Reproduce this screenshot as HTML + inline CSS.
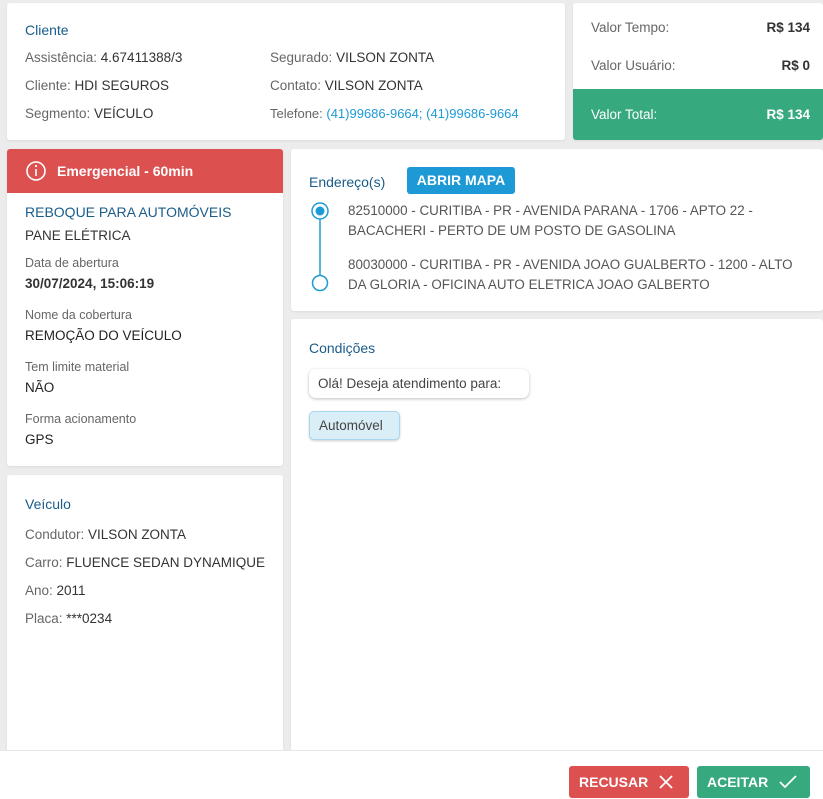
<!DOCTYPE html>
<html><head><meta charset="utf-8"><style>
*{box-sizing:border-box;margin:0;padding:0}
body{width:823px;height:799px;background:#ececec;font-family:"Liberation Sans",sans-serif;font-size:13.5px;color:#666;position:relative;overflow:hidden}
.card{position:absolute;background:#fff;border-radius:3px;box-shadow:0 1px 2px rgba(0,0,0,.08)}
.t{position:absolute;white-space:nowrap}
.h{color:#1a5d8a;font-size:14px}
.b{color:#333}
.lnk{color:#1d9ad6}
.sm{font-size:12.5px;color:#666}
.bold{font-weight:bold;color:#333}
</style></head><body>
<div class="card" style="left:7px;top:3px;width:558px;height:137px">
<div class="t h" style="left:18px;top:19px">Cliente</div>
<div class="t" style="left:18px;top:47px">Assistência: <span class="b">4.67411388/3</span></div>
<div class="t" style="left:18px;top:75px">Cliente: <span class="b">HDI SEGUROS</span></div>
<div class="t" style="left:18px;top:103px">Segmento: <span class="b">VEÍCULO</span></div>
<div class="t" style="left:263px;top:47px">Segurado: <span class="b">VILSON ZONTA</span></div>
<div class="t" style="left:263px;top:75px">Contato: <span class="b">VILSON ZONTA</span></div>
<div class="t" style="left:263px;top:103px;font-size:13px">Telefone: <span class="lnk">(41)99686-9664; (41)99686-9664</span></div>
</div>
<div class="card" style="left:573px;top:3px;width:250px;height:137px;overflow:hidden">
<div class="t" style="left:18px;top:17px">Valor Tempo:</div><div class="t bold" style="right:13px;top:17px">R$ 134</div>
<div class="t" style="left:18px;top:55px">Valor Usuário:</div><div class="t bold" style="right:13px;top:55px">R$ 0</div>
<div style="position:absolute;left:0;top:86px;width:250px;height:51px;background:#37a97e"></div>
<div class="t" style="left:18px;top:104px;color:#fff">Valor Total:</div><div class="t" style="right:13px;top:104px;color:#fff;font-weight:bold">R$ 134</div>
</div>
<div class="card" style="left:7px;top:149px;width:276px;height:317px;overflow:hidden">
<div style="position:absolute;left:0;top:0;width:276px;height:44px;background:#dc5050"></div>
<svg style="position:absolute;left:18px;top:11px" width="22" height="22"><circle cx="11" cy="11" r="9" fill="none" stroke="#fff" stroke-width="1.6"/><line x1="11" y1="9" x2="11" y2="16" stroke="#fff" stroke-width="1.6"/><circle cx="11" cy="6" r="1.1" fill="#fff"/></svg>
<div class="t" style="left:50px;top:14px;color:#fff;font-weight:bold;font-size:14px">Emergencial - 60min</div>
<div class="t h" style="left:18px;top:55px">REBOQUE PARA AUTOMÓVEIS</div>
<div class="t b" style="left:18px;top:79px">PANE ELÉTRICA</div>
<div class="t sm" style="left:18px;top:107px">Data de abertura</div>
<div class="t bold" style="left:18px;top:127px">30/07/2024, 15:06:19</div>
<div class="t sm" style="left:18px;top:159px">Nome da cobertura</div>
<div class="t" style="left:18px;top:179px;color:#222">REMOÇÃO DO VEÍCULO</div>
<div class="t sm" style="left:18px;top:211px">Tem limite material</div>
<div class="t" style="left:18px;top:231px;color:#222">NÃO</div>
<div class="t sm" style="left:18px;top:263px">Forma acionamento</div>
<div class="t" style="left:18px;top:283px;color:#222">GPS</div>
</div>
<div class="card" style="left:7px;top:475px;width:276px;height:290px">
<div class="t h" style="left:18px;top:21px">Veículo</div>
<div class="t" style="left:18px;top:52px">Condutor: <span class="b">VILSON ZONTA</span></div>
<div class="t" style="left:18px;top:80px">Carro: <span class="b">FLUENCE SEDAN DYNAMIQUE</span></div>
<div class="t" style="left:18px;top:108px">Ano: <span class="b">2011</span></div>
<div class="t" style="left:18px;top:136px">Placa: <span class="b">***0234</span></div>
</div>
<div class="card" style="left:291px;top:149px;width:532px;height:162px">
<div class="t h" style="left:18px;top:25px">Endereço(s)</div>
<div style="position:absolute;left:116px;top:18px;width:108px;height:27px;background:#1d9ad6;border-radius:3px;color:#fff;font-weight:bold;font-size:14px;text-align:center;line-height:27px">ABRIR MAPA</div>
<svg style="position:absolute;left:20px;top:52px" width="20" height="92"><line x1="9" y1="10" x2="9" y2="80" stroke="#1d9ad6" stroke-width="1.5"/><circle cx="9" cy="10" r="8" fill="#fff" stroke="#1d9ad6" stroke-width="1.5"/><circle cx="9" cy="10" r="4.5" fill="#1d9ad6"/><circle cx="9" cy="82" r="7.5" fill="#fff" stroke="#1d9ad6" stroke-width="1.5"/></svg>
<div style="position:absolute;left:57px;top:52px;width:460px;font-size:13.4px;line-height:20px;color:#555">82510000 - CURITIBA - PR - AVENIDA PARANA - 1706 - APTO 22 - BACACHERI - PERTO DE UM POSTO DE GASOLINA</div>
<div style="position:absolute;left:57px;top:106px;width:460px;font-size:13.4px;line-height:20px;color:#555">80030000 - CURITIBA - PR - AVENIDA JOAO GUALBERTO - 1200 - ALTO DA GLORIA - OFICINA AUTO ELETRICA JOAO GALBERTO</div>
</div>
<div class="card" style="left:291px;top:319px;width:532px;height:440px">
<div class="t h" style="left:18px;top:21px">Condições</div>
<div style="position:absolute;left:18px;top:50px;width:220px;height:29px;border-radius:7px;box-shadow:0 1px 3px rgba(0,0,0,.25);line-height:29px;padding-left:9px;color:#444">Olá! Deseja atendimento para:</div>
<div style="position:absolute;left:18px;top:92px;width:91px;height:29px;border-radius:5px;background:#daeef8;border:1px solid #a9d8ee;box-shadow:0 1px 2px rgba(0,0,0,.2);line-height:27px;padding-left:9px;color:#444">Automóvel</div>
</div>
<div style="position:absolute;left:0;top:750px;width:823px;height:49px;background:#fff;border-top:1px solid #e6e6e6"></div>
<div style="position:absolute;left:569px;top:766px;width:120px;height:32px;background:#dc5050;border-radius:3px;color:#fff;font-weight:bold;font-size:14px;line-height:32px;padding-left:10px">RECUSAR<svg style="position:absolute;left:90px;top:9px" width="14" height="14"><path d="M1 1L13 13M13 1L1 13" stroke="#fff" stroke-width="1.8"/></svg></div>
<div style="position:absolute;left:697px;top:766px;width:113px;height:32px;background:#37a97e;border-radius:3px;color:#fff;font-weight:bold;font-size:14px;line-height:32px;padding-left:10px">ACEITAR<svg style="position:absolute;left:82px;top:9px" width="18" height="14"><path d="M1 7L6 12L17 1" stroke="#fff" stroke-width="1.8" fill="none"/></svg></div>
</body></html>
